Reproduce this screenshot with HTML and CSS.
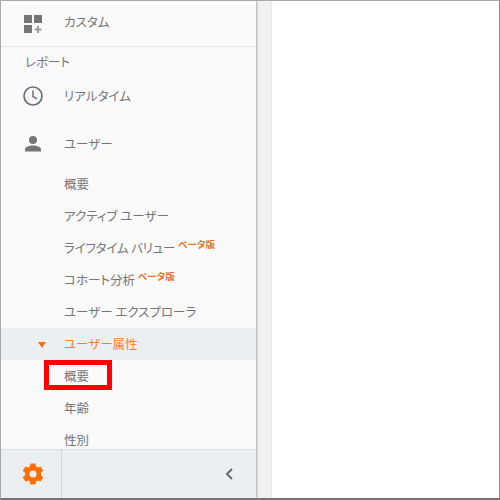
FILE: index.html
```html
<!DOCTYPE html>
<html lang="ja">
<head>
<meta charset="utf-8">
<title>ユーザー属性</title>
<link rel="stylesheet" href="styles.css">
</head>
<body>
<div class="frame">
  <aside class="sidebar">
    <nav class="nav">
      <div class="row custom">
        <svg class="icon" viewBox="0 0 18 18"><path d="M0 0h8v8H0zM10 0h8v8h-8zM0 10h8v8H0z" fill="#757575"/><path d="M13 11h2v2.500h2.500v2H15V18h-2v-2.500h-2.500v-2H13z" fill="#9a9a9a"/></svg>
        <span>カスタム</span>
      </div>
      <div class="section">レポート</div>
      <div class="row realtime">
        <svg class="icon" viewBox="0 0 20 20"><circle cx="10" cy="10" r="9" fill="none" stroke="#66707a" stroke-width="1.700"/><path d="M10 4.500V10.500l4 2.300" fill="none" stroke="#66707a" stroke-width="1.500"/></svg>
        <span>リアルタイム</span>
      </div>
      <div class="row user">
        <svg class="icon" viewBox="0 0 18 18"><circle cx="9" cy="5" r="4" fill="#757575"/><path d="M1 16.500v-2C1 11.500 6 10.500 9 10.500s8 1 8 4v2z" fill="#757575"/></svg>
        <span>ユーザー</span>
      </div>
      <div class="sub">概要</div>
      <div class="sub">アクティブ ユーザー</div>
      <div class="sub tight">ライフタイム バリュー<sup class="beta">ベータ版</sup></div>
      <div class="sub">コホート分析<sup class="beta">ベータ版</sup></div>
      <div class="sub">ユーザー エクスプローラ</div>
      <div class="sub open"><i class="caret"></i>ユーザー属性</div>
      <div class="sub marked">概要<div class="mark"></div></div>
      <div class="sub">年齢</div>
      <div class="sub">性別</div>
    </nav>
    <footer class="foot">
      <div class="gear">
        <svg viewBox="0 0 24 24" width="24" height="24"><path fill="#ff6d00" fill-rule="evenodd" d="M9.500 1.500h5l.6 3 1.700 1 2.900-1 2.500 4.300-2.300 2v2.400l2.300 2-2.500 4.300-2.900-1-1.700 1-.6 3h-5l-.6-3-1.700-1-2.900 1-2.500-4.300 2.300-2v-2.400l-2.300-2 2.500-4.300 2.900 1 1.700-1zM12 8.500a3.500 3.500 0 1 0 0 7 3.500 3.500 0 0 0 0-7z"/></svg>
      </div>
      <div class="collapse">
        <svg viewBox="0 0 10 14" width="10" height="14"><path d="M8 2L3 7l5 5" fill="none" stroke="#5f6b75" stroke-width="2"/></svg>
      </div>
    </footer>
  </aside>
  <div class="gutter"></div>
  <main class="content"></main>
</div>
</body>
</html>
```
FILE: styles.css
```css
* { box-sizing: border-box; }
html, body { margin: 0; height: 100%; }
body { background: #fff; font-family: "Noto Sans CJK JP", "Noto Sans", sans-serif; }
.frame {
  width: 500px; height: 500px; display: flex; overflow: hidden;
  border-style: solid; border-color: #a9a9a9 #8a8a8a #757575 #a9a9a9;
  border-width: 1px 1px 2px 1px;
}
.sidebar {
  width: 255px; display: flex; flex-direction: column; background: #fafafa;
  box-shadow: 1px 0 2px rgba(0,0,0,.28); position: relative; z-index: 1;
}
.nav { flex: 1; min-height: 0; overflow: hidden; font-size: 12.500px; color: #757575; font-feature-settings: "palt"; }
.row { display: flex; align-items: center; gap: 0; }
.row span { margin-left: 63px; }
.icon { flex: none; margin-left: 23px; width: 18px; height: 18px; margin-right: -41px; }
.custom { height: 46px; border-bottom: 1px solid #e5e5e5; }
.custom span { padding-bottom: 5px; }
.section { height: 31px; line-height: 30px; padding-left: 24px; }
.realtime { height: 36px; }
.realtime span { padding-bottom: 2px; }
.realtime .icon { width: 20px; height: 20px; margin-left: 22px; margin-right: -42px; }
.user { height: 59px; }
.sub { height: 32px; line-height: 32px; padding-left: 63px; white-space: nowrap; position: relative; }
.user + .sub { height: 21px; line-height: 21px; margin-bottom: 6px; }
.tight { letter-spacing: -.2px; }
.beta { font-size: 9.500px; font-weight: 700; color: #e8762b; line-height: 0; vertical-align: 5px; margin-left: 3px; letter-spacing: 0; }
.open { background: #eceff1; color: #ff7f2e; }
.caret {
  position: absolute; left: 37px; top: 14px; width: 0; height: 0;
  border-style: solid; border-width: 6px 4px 0; border-color: #ff6d00 transparent transparent;
}
.mark { position: absolute; left: 43px; top: 0; width: 68px; height: 30px; border: 5px solid #f00; }
.foot { height: 49px; flex: none; display: flex; background: #eceff1; border-top: 1px solid #dcdcdc; }
.gear { width: 61px; padding-left: 4px; border-right: 1px solid #d5d5d5; display: flex; align-items: center; justify-content: center; }
.collapse { flex: 1; display: flex; align-items: center; justify-content: flex-end; padding-right: 22px; }
.gutter { width: 16px; background: #f1f1f1; border-right: 1px solid #e8e8e8; }
.content { flex: 1; background: #fff; }
```
